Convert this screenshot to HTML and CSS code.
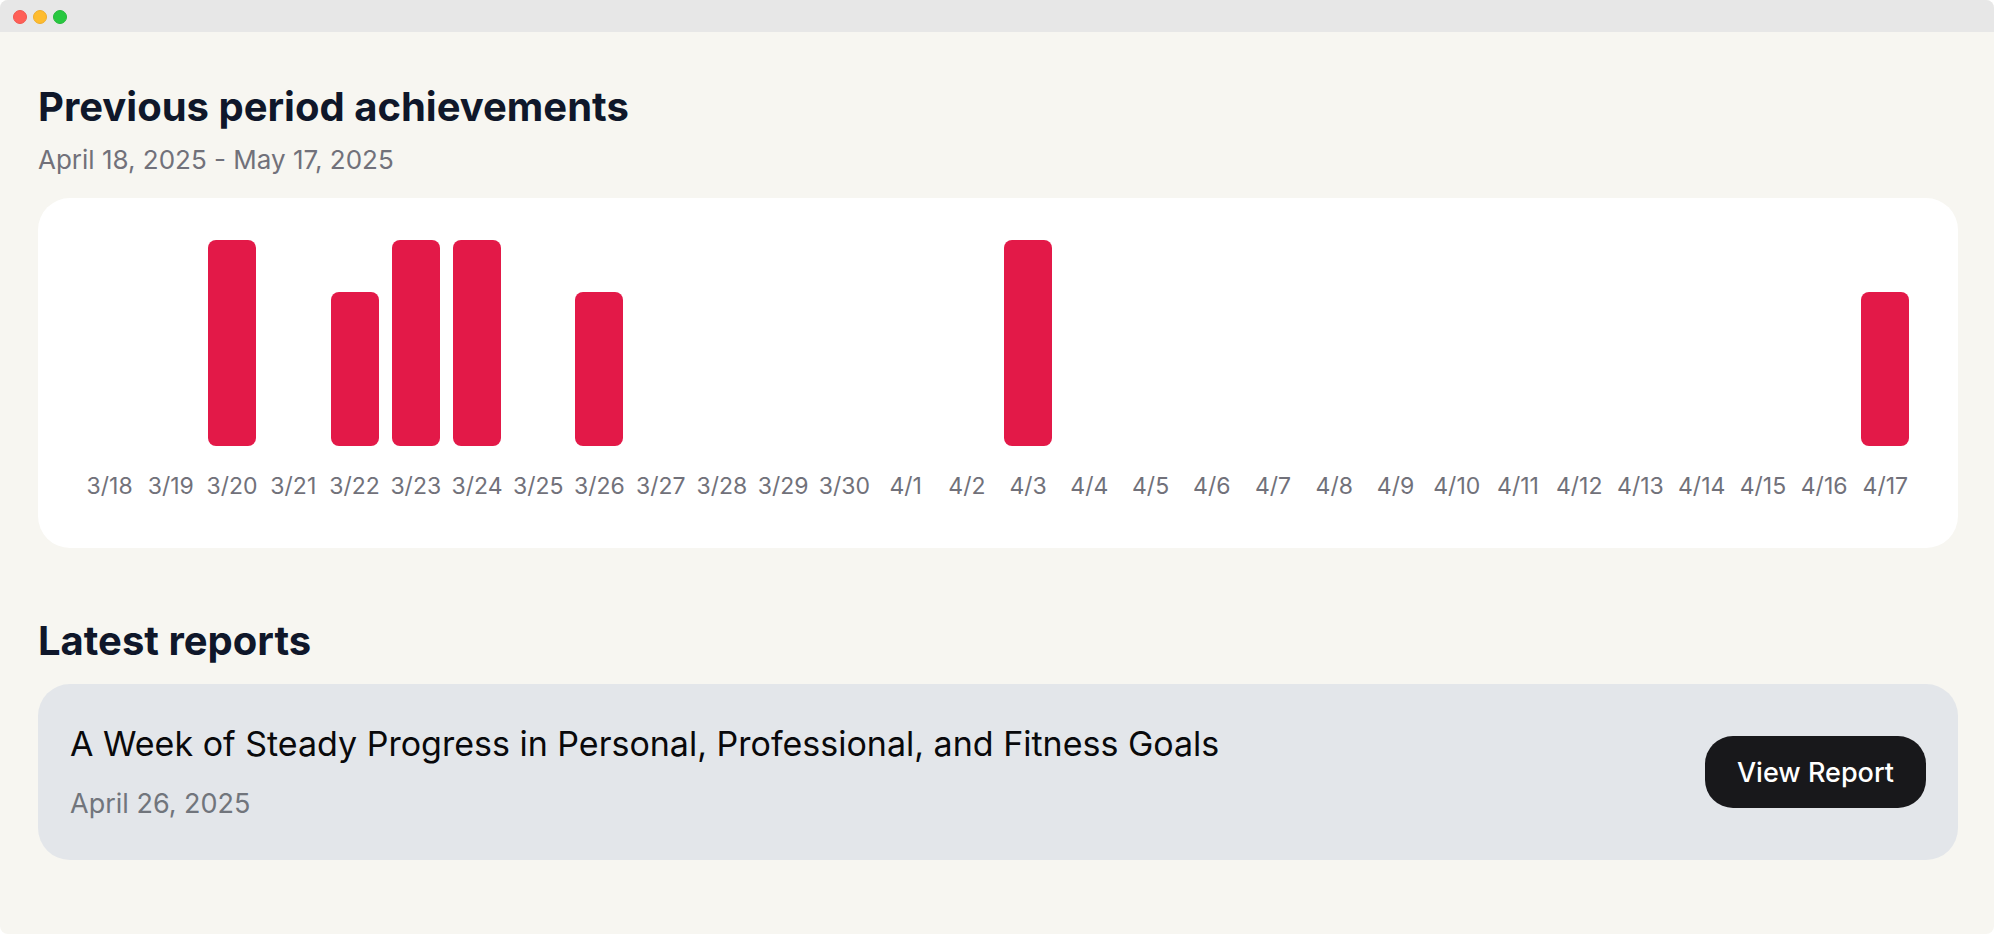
FILE: index.html
```html
<!DOCTYPE html>
<html lang="en">
<head>
<meta charset="utf-8">
<title>Achievements</title>
<link rel="stylesheet" href="styles.css">
</head>
<body>
<div class="window">
  <header class="titlebar">
    <span class="dot dot-close"></span>
    <span class="dot dot-minimize"></span>
    <span class="dot dot-zoom"></span>
  </header>
  <main class="content">
    <section class="section">
      <h1 class="heading">Previous period achievements</h1>
      <p class="period">April 18, 2025 - May 17, 2025</p>
      <div class="chart" id="chart"></div>
    </section>
    <section class="section">
      <h2 class="heading heading-reports">Latest reports</h2>
      <article class="report">
        <div class="report-text">
          <h3 class="report-title">A Week of Steady Progress in Personal, Professional, and Fitness Goals</h3>
          <p class="report-date">April 26, 2025</p>
        </div>
        <button class="view-button" type="button">View Report</button>
      </article>
    </section>
  </main>
</div>
<script src="chart.js"></script>
</body>
</html>
```
FILE: styles.css
```css
* { box-sizing: border-box; }
body {
  margin: 0;
  background: #ffffff;
  font-family: Inter, "Liberation Sans", sans-serif;
}
h1, h2, h3, p { margin: 0; }
.window {
  min-height: 100vh;
  border-radius: 8px;
  overflow: hidden;
  background: #f7f6f1;
}
.titlebar {
  display: flex;
  align-items: center;
  gap: 6px;
  height: 32px;
  padding: 2px 13px 0;
  background: #e7e7e7;
}
.dot {
  width: 14px;
  height: 14px;
  border-radius: 50%;
  border: 1px solid;
}
.dot-close { background: #ff5f57; border-color: #f0564f; }
.dot-minimize { background: #febc2e; border-color: #eeae2c; }
.dot-zoom { background: #28c840; border-color: #25b83b; }
.content {
  display: flex;
  flex-direction: column;
  gap: 69px;
  padding: 51px 36px 72px 38px;
}
.heading {
  font-size: 40px;
  line-height: 48px;
  font-weight: 700;
  color: #0f172a;
}
.heading-reports { margin-bottom: 19px; }
.period {
  margin: 9px 0 18px;
  font-size: 26px;
  line-height: 40px;
  color: #71717a;
}
.chart {
  display: grid;
  grid-auto-flow: column;
  grid-auto-columns: minmax(0, 1fr);
  padding: 42px 42px 42px 41px;
  border-radius: 32px;
  background: #ffffff;
}
.day {
  display: flex;
  flex-direction: column;
  align-items: center;
  gap: 24px;
}
.track {
  display: flex;
  align-items: flex-end;
  width: 48px;
  height: 206px;
}
.bar {
  width: 100%;
  border-radius: 8px;
  background: #e31948;
}
.label {
  height: 36px;
  font-size: 23px;
  line-height: 32px;
  white-space: nowrap;
  color: #71717a;
}
.report {
  display: flex;
  align-items: center;
  justify-content: space-between;
  gap: 32px;
  padding: 32px;
  border-radius: 32px;
  background: #e3e6ea;
}
.report-text {
  display: flex;
  flex-direction: column;
  gap: 8px;
}
.report-title {
  font-size: 34px;
  line-height: 56px;
  font-weight: 400;
  color: #09090b;
}
.report-date {
  font-size: 27px;
  line-height: 48px;
  color: #71757c;
}
.view-button {
  flex: none;
  height: 72px;
  padding: 0 32px;
  border: 0;
  border-radius: 28px;
  background: #18181b;
  color: #ffffff;
  font-family: inherit;
  font-size: 27px;
  font-weight: 500;
}
```
FILE: chart.js
```js
const days = [
  ["3/18", 0], ["3/19", 0], ["3/20", 100], ["3/21", 0], ["3/22", 75],
  ["3/23", 100], ["3/24", 100], ["3/25", 0], ["3/26", 75], ["3/27", 0],
  ["3/28", 0], ["3/29", 0], ["3/30", 0], ["4/1", 0], ["4/2", 0],
  ["4/3", 100], ["4/4", 0], ["4/5", 0], ["4/6", 0], ["4/7", 0],
  ["4/8", 0], ["4/9", 0], ["4/10", 0], ["4/11", 0], ["4/12", 0],
  ["4/13", 0], ["4/14", 0], ["4/15", 0], ["4/16", 0], ["4/17", 75],
];

document.getElementById("chart").innerHTML = days.map(([label, value]) => `
  <div class="day">
    <div class="track">${value ? `<div class="bar" style="height:${value}%"></div>` : ""}</div>
    <span class="label">${label}</span>
  </div>`).join("");
```
